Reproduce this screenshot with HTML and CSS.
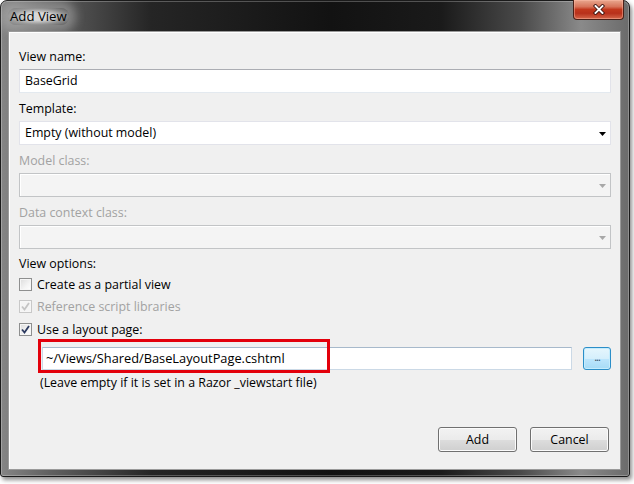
FILE: index.html
```html
<!DOCTYPE html>
<html>
<head>
<meta charset="utf-8">
<title>Add View</title>
<link rel="stylesheet" href="styles.css">
</head>
<body>
<div class="window">
  <div class="titlebar">
    <span class="title">Add View</span>
    <div class="close-btn">
      <svg width="16" height="11" viewBox="0 0 16 11">
        <path d="M4.5 2 L11.5 9 M11.5 2 L4.5 9" stroke="#3a1410" stroke-width="3.6" stroke-linecap="square" fill="none"/>
        <path d="M4.5 2 L11.5 9 M11.5 2 L4.5 9" stroke="#ffffff" stroke-width="1.9" stroke-linecap="square" fill="none"/>
      </svg>
    </div>
  </div>
  <div class="client">
    <div class="label first">View name:</div>
    <div class="textbox">BaseGrid</div>

    <div class="label">Template:</div>
    <div class="combo">
      <span>Empty (without model)</span>
      <svg class="arrow" width="7" height="4" viewBox="0 0 7 4"><path d="M0 0 H7 L3.5 4 Z" fill="#000"/></svg>
    </div>

    <div class="label disabled">Model class:</div>
    <div class="combo off">
      <span></span>
      <svg class="arrow" width="7" height="4" viewBox="0 0 7 4"><path d="M0 0 H7 L3.5 4 Z" fill="#a8a8a8"/></svg>
    </div>

    <div class="label disabled">Data context class:</div>
    <div class="combo off">
      <span></span>
      <svg class="arrow" width="7" height="4" viewBox="0 0 7 4"><path d="M0 0 H7 L3.5 4 Z" fill="#a8a8a8"/></svg>
    </div>

    <div class="label options">View options:</div>
    <div class="check-row">
      <span class="check"></span>
      <span>Create as a partial view</span>
    </div>
    <div class="check-row disabled">
      <span class="check off">
        <svg width="9" height="9" viewBox="0 0 9 9"><path d="M1 4.5 L3.5 7.5 L8 1" stroke="#c4c4c4" stroke-width="1.8" fill="none"/></svg>
      </span>
      <span>Reference script libraries</span>
    </div>
    <div class="check-row layout">
      <span class="check">
        <svg width="9" height="9" viewBox="0 0 9 9"><path d="M1 4.5 L3.5 7.5 L8 1" stroke="#2c3a60" stroke-width="1.8" fill="none"/></svg>
      </span>
      <span>Use a layout page:</span>
    </div>

    <div class="path-row">
      <div class="textbox path">~/Views/Shared/BaseLayoutPage.cshtml</div>
      <div class="browse">...</div>
      <div class="highlight"></div>
    </div>
    <div class="note">(Leave empty if it is set in a Razor _viewstart file)</div>

    <div class="buttons">
      <div class="btn">Add</div>
      <div class="btn">Cancel</div>
    </div>
  </div>
</div>
</body>
</html>
```

FILE: styles.css
```css
html, body {
  margin: 0;
  padding: 0;
  background: #ffffff;
}

body {
  width: 634px;
  height: 484px;
  overflow: hidden;
  font-family: "Open Sans", "Noto Sans", "Liberation Sans", sans-serif;
  font-size: 12.4px;
  color: #000;
}

.window {
  width: 630px;
  height: 477px;
  box-sizing: border-box;
  border-radius: 7px 7px 3px 3px;
  border: 1px solid #1a1a1a;
  background:
    linear-gradient(to right, #858585 0px, #606060 50px, #252525 150px, #121212 330px, #1a1a1a 440px, #4a4a4a 520px, #8a8a8a 580px, #6a6a6a 630px);
  box-shadow: 2px 3px 4px rgba(0, 0, 0, 0.45), inset 0 0 0 1px rgba(255, 255, 255, 0.25);
  display: flex;
  flex-direction: column;
}

.titlebar {
  height: 30px;
  display: flex;
  justify-content: space-between;
  align-items: flex-start;
  flex: none;
}

.title {
  margin-top: 7px;
  margin-left: 7px;
  padding: 0 2px;
  line-height: 17px;
  font-size: 13.2px;
  color: #000;
  border-radius: 8px;
  background: radial-gradient(ellipse at center, rgba(235, 235, 235, 0.85) 30%, rgba(200, 200, 200, 0.45) 65%, rgba(160, 160, 160, 0) 100%);
  box-shadow: 0 0 10px 7px rgba(200, 200, 200, 0.4);
}

.close-btn {
  width: 49px;
  height: 19px;
  margin-right: 5px;
  margin-top: -1px;
  border: 1px solid #4a2018;
  border-top: none;
  border-radius: 0 0 4px 4px;
  background: linear-gradient(to bottom, #e9a88f 0%, #d7745a 35%, #c2381d 50%, #b8301b 70%, #d4664a 100%);
  box-shadow: inset 0 0 0 1px rgba(255, 190, 170, 0.45);
  display: flex;
  align-items: center;
  justify-content: center;
}

.client {
  margin: 0 8px 6px 7px;
  flex: 1;
  background: #f0f0f0;
  border: 1px solid #9a9a9a;
  box-shadow: inset 1px 1px 0 #ffffff;
  padding: 0 9px 0 10px;
  display: flex;
  flex-direction: column;
}

.label {
  height: 16px;
  line-height: 16px;
  margin-top: 8px;
  margin-bottom: 4px;
}

.label.first {
  margin-top: 17px;
}

.label.disabled,
.check-row.disabled {
  color: #a2a2a2;
}

.label.options {
  margin-top: 7px;
  margin-bottom: 1px;
}

.textbox,
.combo {
  height: 24px;
  box-sizing: border-box;
  background: #ffffff;
  border: 1px solid #e2e3ea;
  border-top-color: #abadb3;
  border-bottom-color: #e3e9ef;
  padding-left: 5px;
  line-height: 22px;
}

.combo {
  display: flex;
  align-items: center;
  justify-content: space-between;
  padding-right: 4px;
  border-color: #e2e3ea;
}

.combo .arrow {
  margin-top: 1px;
}

.combo.off {
  background: #f4f4f4;
  border: 1px solid #c2c4c6;
  box-shadow: inset 1px 1px 0 #ffffff;
}

.check-row {
  height: 22px;
  display: flex;
  align-items: center;
  gap: 5px;
}

.check-row.layout {
  margin-top: 2px;
  height: 20px;
}

.check {
  width: 13px;
  height: 13px;
  box-sizing: border-box;
  border: 1px solid #8e8f8f;
  background: linear-gradient(135deg, #dcdcdc 0%, #f4f4f4 60%, #ffffff 100%);
  box-shadow: inset 0 0 0 1px #f6f6f6;
  display: flex;
  align-items: center;
  justify-content: center;
}

.check.off {
  border-color: #c8c8c8;
  background: #f4f4f4;
}

.path-row {
  position: relative;
  height: 34px;
  display: flex;
  align-items: flex-start;
  padding-top: 8px;
  box-sizing: border-box;
  margin-left: 23px;
}

.textbox.path {
  width: 530px;
  height: 23px;
  line-height: 21px;
  padding-left: 3px;
  font-size: 12.8px;
  border-color: #cbd9e6;
  border-top-color: #a7b9cb;
}

.browse {
  width: 28px;
  height: 23px;
  box-sizing: border-box;
  margin-left: 11px;
  border: 1px solid #2b8ec8;
  border-radius: 3px;
  background: linear-gradient(to bottom, #e6f6fd 0%, #d5effc 50%, #bde6fd 51%, #a6dbf6 100%);
  box-shadow: inset 0 0 0 1px #c4ecfd;
  text-align: center;
  line-height: 17px;
  font-size: 11px;
  color: #3a4a5a;
  letter-spacing: -1px;
}

.highlight {
  position: absolute;
  left: -4px;
  top: 0;
  width: 292px;
  height: 34px;
  box-sizing: border-box;
  border: 3px solid #e3000b;
}

.note {
  margin-top: 2px;
  margin-left: 21px;
  height: 16px;
  line-height: 16px;
}

.buttons {
  margin-top: 36px;
  display: flex;
  justify-content: flex-end;
  gap: 13px;
  padding-right: 2px;
}

.btn {
  width: 79px;
  height: 25px;
  box-sizing: border-box;
  border: 1px solid #707070;
  border-radius: 3px;
  background: linear-gradient(to bottom, #f2f2f2 0%, #ebebeb 50%, #dddddd 51%, #cfcfcf 100%);
  box-shadow: inset 0 0 0 1px #fbfbfb;
  text-align: center;
  line-height: 23px;
}
```
